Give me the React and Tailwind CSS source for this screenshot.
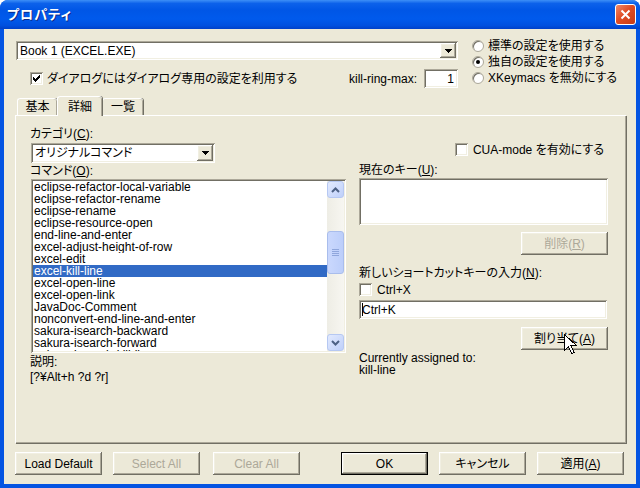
import React from 'react';

// classic 3D edges on the XP beige face
const raised =
  'bg-[#ece9d8] shadow-[inset_-1px_-1px_0_#716f64,inset_1px_1px_0_#ffffff,inset_-2px_-2px_0_#aca899,inset_2px_2px_0_#f1efe2]';
const sunken =
  'bg-white shadow-[inset_1px_1px_0_#aca899,inset_-1px_-1px_0_#ffffff,inset_2px_2px_0_#716f64,inset_-2px_-2px_0_#f1efe2]';

const commands = [
  'eclipse-refactor-local-variable',
  'eclipse-refactor-rename',
  'eclipse-rename',
  'eclipse-resource-open',
  'end-line-and-enter',
  'excel-adjust-height-of-row',
  'excel-edit',
  'excel-kill-line',
  'excel-open-line',
  'excel-open-link',
  'JavaDoc-Comment',
  'nonconvert-end-line-and-enter',
  'sakura-isearch-backward',
  'sakura-isearch-forward',
  'sakura-isearch-kill-line',
];

const U = ({ children }) => <span className="underline underline-offset-[1px]">{children}</span>;

function Check({ checked }) {
  return (
    <span className={`w-[13px] h-[13px] shrink-0 flex items-center justify-center ${sunken}`}>
      {checked && (
        <svg width="7" height="7" viewBox="0 0 7 7" shapeRendering="crispEdges">
          <path d="M0 2h1v3H0zM1 3h1v3H1zM2 4h1v3H2zM3 3h1v3H3zM4 2h1v3H4zM5 1h1v3H5zM6 0h1v3H6z" fill="#000" />
        </svg>
      )}
    </span>
  );
}

function Radio({ checked, children }) {
  return (
    <div className="h-[16px] flex items-center gap-[4px]">
      <span className="w-[12px] h-[12px] rounded-full bg-white border border-[#aca899] shadow-[inset_1px_1px_0_#716f64] flex items-center justify-center">
        {checked && <span className="w-[4px] h-[4px] rounded-full bg-black" />}
      </span>
      <span>{children}</span>
    </div>
  );
}

function DropArrow() {
  return (
    <span className={`w-[16px] h-full flex items-center justify-center ${raised}`}>
      <svg width="7" height="4" viewBox="0 0 7 4" shapeRendering="crispEdges">
        <path d="M0 0h7v1H0zM1 1h5v1H1zM2 2h3v1H2zM3 3h1v1H3z" fill="#000" />
      </svg>
    </span>
  );
}

function Combo({ value, className }) {
  return (
    <div className={`flex p-[2px] ${sunken} ${className}`}>
      <span className="flex-1 pl-[2px] flex items-center leading-[12px]">{value}</span>
      <DropArrow />
    </div>
  );
}

function Button({ children, disabled, isDefault, className = '' }) {
  if (isDefault) {
    return (
      <div className={`w-[87px] h-[23px] border border-black ${className}`}>
        <div className={`w-full h-full flex items-center justify-center ${raised}`}>{children}</div>
      </div>
    );
  }
  return (
    <div
      className={`w-[87px] h-[23px] flex items-center justify-center ${raised} ${
        disabled ? 'text-[#aca899]' : ''
      } ${className}`}
    >
      {children}
    </div>
  );
}

function ScrollBtn({ up }) {
  return (
    <div className="w-[17px] h-[17px] rounded-[3px] border border-[#b6c8f2] bg-[linear-gradient(135deg,#e2eafe,#bfd0fa)] flex items-center justify-center">
      <svg width="9" height="6" viewBox="0 0 9 6">
        <path
          d={up ? 'M1 5 L4.5 1.5 L8 5' : 'M1 1 L4.5 4.5 L8 1'}
          stroke="#4d6185"
          strokeWidth="2"
          fill="none"
        />
      </svg>
    </div>
  );
}

function ScrollBar() {
  return (
    <div className="w-[17px] h-full flex flex-col bg-[linear-gradient(to_right,#eeede5,#f7f6f1)]">
      <ScrollBtn up />
      <div className="flex-1">
        <div className="mt-[33px] h-[43px] rounded-[3px] border border-[#a9bdec] bg-[linear-gradient(to_right,#cad8fd,#bccefa)] flex flex-col items-center justify-center gap-[1px]">
          {[0, 1, 2, 3].map((i) => (
            <span key={i} className="w-[7px] h-[1px] bg-[#8fa6dc]" />
          ))}
        </div>
      </div>
      <ScrollBtn />
    </div>
  );
}

function Tab({ children, active }) {
  return (
    <div
      className={`relative flex items-center justify-center rounded-t-[3px] border-l border-t border-white shadow-[inset_-1px_0_0_#aca899,1px_0_0_#716f64] bg-[#ece9d8] ${
        active ? 'h-[20px] -mb-[1px] z-10' : 'h-[17px]'
      }`}
    >
      {children}
    </div>
  );
}

export default function App() {
  return (
    <div className="relative w-[640px] h-[488px] bg-white font-['Liberation_Sans','Noto_Sans_CJK_JP',sans-serif] text-[12px] leading-[12px] text-black [font-feature-settings:'palt']">
      <div className="w-full h-full flex flex-col rounded-t-[8px] bg-[#0454e2] overflow-hidden">
        {/* caption */}
        <div className="h-[29px] shrink-0 flex items-center justify-between pl-[7px] pr-[4px] bg-[linear-gradient(to_bottom,#3d8ff7_0%,#0c61ea_12%,#0056e6_35%,#005aec_65%,#0050df_88%,#0040c8_100%)]">
          <span className="text-white font-bold text-[13px] leading-[13px] tracking-[1px] [text-shadow:1px_1px_0_#0b2b8a]">
            プロパティ
          </span>
          <div className="w-[21px] h-[21px] rounded-[3px] border border-white bg-[linear-gradient(135deg,#ef8a6b,#e04d25_45%,#c63b16)] flex items-center justify-center">
            <svg width="11" height="11" viewBox="0 0 11 11">
              <path d="M1.5 1.5 L9.5 9.5 M9.5 1.5 L1.5 9.5" stroke="#fff" strokeWidth="2" />
            </svg>
          </div>
        </div>

        {/* dialog face */}
        <div className="flex-1 mx-[4px] mb-[4px] bg-[#ece9d8] flex flex-col">
          <div className="flex items-start">
            <div className="w-[442px] ml-[12px] mt-[12px] flex flex-col">
              <Combo value="Book 1 (EXCEL.EXE)" className="h-[19px]" />
              <div className="mt-[9px] h-[19px] flex items-center">
                <div className="ml-[14px] flex items-center gap-[4px]">
                  <Check checked />
                  <span>ダイアログにはダイアログ専用の設定を利用する</span>
                </div>
                <span className="ml-auto mr-[7px]">kill-ring-max:</span>
                <div className={`w-[34px] h-[19px] flex items-center justify-end pr-[4px] ${sunken}`}>1</div>
              </div>
            </div>
            <div className="ml-[14px] mt-[9px] flex flex-col">
              <Radio>標準の設定を使用する</Radio>
              <Radio checked>独自の設定を使用する</Radio>
              <Radio>XKeymacs を無効にする</Radio>
            </div>
          </div>

          {/* tabs */}
          <div className="mt-[8px] ml-[13px] h-[19px] flex items-end">
            <div className="w-[40px]">
              <Tab>基本</Tab>
            </div>
            <div className="w-[45px]">
              <Tab active>詳細</Tab>
            </div>
            <div className="w-[41px]">
              <Tab>一覧</Tab>
            </div>
          </div>

          <div className="ml-[11px] w-[611px] h-[328px] border-l border-t border-white shadow-[inset_-1px_-1px_0_#aca899,1px_1px_0_#716f64] flex">
            {/* left column */}
            <div className="ml-[14px] w-[316px] flex flex-col">
              <div className="mt-[12px] h-[12px]">
                カテゴリ(<U>C</U>):
              </div>
              <Combo value="オリジナルコマンド" className="mt-[3px] ml-[1px] w-[184px] h-[20px]" />
              <div className="mt-[2px] h-[12px]">
                コマンド(<U>O</U>):
              </div>
              <div className={`mt-[2px] ml-[1px] w-[315px] h-[174px] p-[2px] flex ${sunken}`}>
                <div className="flex-1 overflow-hidden flex flex-col">
                  {commands.map((c) => (
                    <div
                      key={c}
                      className={`h-[12px] shrink-0 pl-[1px] leading-[12px] overflow-hidden ${
                        c === 'excel-kill-line' ? 'bg-[#316ac5] text-white' : ''
                      }`}
                    >
                      {c}
                    </div>
                  ))}
                </div>
                <ScrollBar />
              </div>
              <div className="mt-[3px] h-[12px]">説明:</div>
              <div className="mt-[3px] h-[12px]">[?¥Alt+h ?d ?r]</div>
            </div>

            {/* right column */}
            <div className="ml-[13px] w-[249px] flex flex-col">
              <div className="mt-[27px] h-[13px] flex items-center justify-end gap-[5px] pr-[4px]">
                <Check />
                <span>CUA-mode を有効にする</span>
              </div>
              <div className="mt-[8px] h-[12px]">
                現在のキー(<U>U</U>):
              </div>
              <div className={`mt-[2px] h-[47px] ${sunken}`} />
              <Button disabled className="mt-[7px] self-end h-[21px]">
                削除(<U>R</U>)
              </Button>
              <div className="mt-[12px] h-[12px]">
                新しいショートカットキーの入力(<U>N</U>):
              </div>
              <div className="mt-[4px] h-[13px] flex items-center gap-[5px]">
                <Check />
                <span>Ctrl+X</span>
              </div>
              <div className={`mt-[4px] w-[248px] h-[19px] flex items-center pl-[3px] ${sunken}`}>
                <span className="w-[1px] h-[13px] bg-black" />
                <span className="-ml-[1px]">Ctrl+K</span>
              </div>
              <Button className="mt-[8px] self-end">
                割り当て(<U>A</U>)
              </Button>
              <div className="mt-[2px] h-[12px]">Currently assigned to:</div>
              <div className="h-[12px]">kill-line</div>
            </div>
          </div>

          {/* dialog buttons */}
          <div className="mt-[9px] flex items-center">
            <Button className="ml-[11px]">Load Default</Button>
            <Button disabled className="ml-[11px]">
              Select All
            </Button>
            <Button disabled className="ml-[13px]">
              Clear All
            </Button>
            <Button isDefault className="ml-[41px]">
              OK
            </Button>
            <Button className="ml-[11px]">キャンセル</Button>
            <Button className="ml-[11px]">
              適用(<U>A</U>)
            </Button>
          </div>
        </div>
      </div>

      {/* mouse pointer over the assign button */}
      <svg className="absolute left-[564px] top-[334px]" width="13" height="21" viewBox="0 0 13 21" shapeRendering="crispEdges">
        <path d="M0.5 0.5 L0.5 16.5 L4.5 12.5 L7.5 19.5 L10 18.5 L7 11.5 L12.5 11.5 Z" fill="#fff" stroke="#000" strokeWidth="1" />
      </svg>
    </div>
  );
}
